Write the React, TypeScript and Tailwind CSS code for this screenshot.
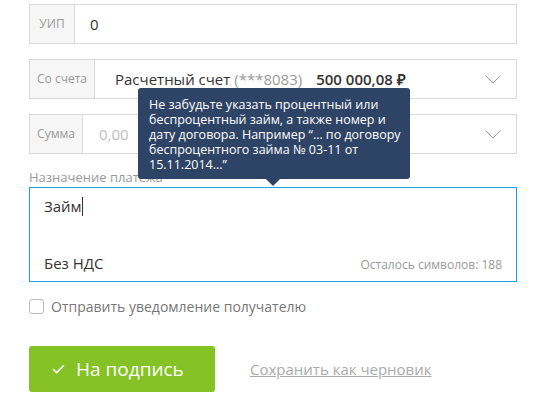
import { Check } from 'lucide-react'

function Chevron() {
  return (
    <svg width="16" height="9" viewBox="0 0 16 9" className="text-[#9a9a9a]">
      <path d="M0.5 0.5 L8 8 L15.5 0.5" fill="none" stroke="currentColor" strokeWidth="1" />
    </svg>
  )
}

export default function App() {
  return (
    <div className="relative w-[547px] h-[416px] bg-white font-['Open_Sans',sans-serif] text-[#333]">
      <div className="pl-[29px] pt-[4px] w-[517px] flex flex-col">
        <div className="flex h-[40px] border border-[#d9d9d9]">
          <div className="w-[45px] flex items-center justify-center bg-[#f6f6f6] border-r border-[#d9d9d9] text-[12px] text-[#999]">
            УИП
          </div>
          <div className="flex-1 flex items-center pl-[15px] text-[15px]">0</div>
        </div>

        <div className="mt-[15px] flex h-[40px] border border-[#d9d9d9]">
          <div className="w-[65px] flex items-center justify-center bg-[#f6f6f6] border-r border-[#d9d9d9] text-[12px] text-[#999]">
            Со счета
          </div>
          <div className="flex-1 flex items-center pl-[20px] pr-[15px] text-[15px]">
            <span>
              Расчетный счет <span className="text-[#999]">(***8083)</span>
            </span>
            <span className="ml-[14px] text-[15px] font-semibold">500 000,08 ₽</span>
            <span className="ml-auto flex"><Chevron /></span>
          </div>
        </div>

        <div className="mt-[15px] flex h-[40px] border border-[#d9d9d9]">
          <div className="w-[53px] flex items-center justify-center bg-[#f6f6f6] border-r border-[#d9d9d9] text-[12px] text-[#999]">
            Сумма
          </div>
          <div className="flex-1 flex items-center pl-[16px] pr-[15px] text-[15px] text-[#c0c0c0]">
            <span>0,00</span>
            <span className="ml-auto flex"><Chevron /></span>
          </div>
        </div>

        <div className="mt-[14px] h-[19px] text-[13px] text-[#999] leading-[19px]">Назначение платежа</div>

        <div className="flex flex-col h-[95px] border border-[#1aa3e0] pl-[14px] pr-[14px] pt-[7px] pb-[7px]">
          <div className="flex items-center text-[15px] leading-[22px]">
            Займ<span className="inline-block w-px h-[19px] bg-[#333]" />
          </div>
          <div className="mt-auto flex items-baseline justify-between">
            <span className="text-[15px] leading-[22px]">Без НДС</span>
            <span className="text-[12px] text-[#999]">Осталось символов: 188</span>
          </div>
        </div>

        <label className="mt-[14px] h-[20px] flex items-center gap-[7px]">
          <span className="w-[15px] h-[15px] rounded-[3px] border border-[#bbb] bg-white" />
          <span className="text-[14px] text-[#777]">Отправить уведомление получателю</span>
        </label>

        <div className="mt-[30px] flex items-center">
          <button className="w-[186px] h-[46px] rounded-[3px] bg-[#84c225] text-white flex items-center pl-[22px] gap-[10px] text-[19px]">
            <Check size={15} strokeWidth={2.5} />
            На подпись
          </button>
          <a className="ml-[35px] text-[15px] text-[#aaa] underline">Сохранить как черновик</a>
        </div>
      </div>

      <div className="absolute left-[138px] top-[88px] w-[272px] h-[91px] rounded-[3px] bg-[#2e4466] text-white text-[12.5px] leading-[15px] px-[11px] pt-[9px] whitespace-nowrap">
        Не забудьте указать процентный или
        <br />
        беспроцентный займ, а также номер и
        <br />
        дату договора. Например “… по договору
        <br />
        беспроцентного займа № 03-11 от
        <br />
        15.11.2014…”
        <span className="absolute left-[128px] -bottom-[7px] w-0 h-0 border-x-[7px] border-x-transparent border-t-[7px] border-t-[#2e4466]" />
      </div>
    </div>
  )
}
